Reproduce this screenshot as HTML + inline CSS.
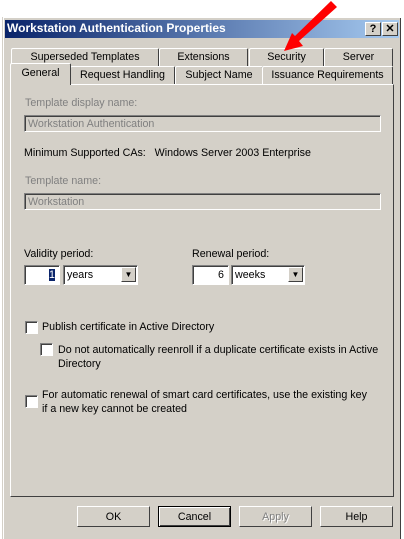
<!DOCTYPE html>
<html><head><style>
body{margin:0;width:404px;height:539px;background:#fff;position:relative;overflow:hidden;font-family:"Liberation Sans",Arial,sans-serif;font-size:10.7px;color:#000}
.a{position:absolute}
.win{left:2px;top:17px;width:398px;height:522px;background:#d4d0c8;border-left:1px solid #d4d0c8;box-shadow:inset 1px 1px 0 #fff,inset -1px 0 0 #404040}
.title{left:5px;top:20px;width:394px;height:18px;background:linear-gradient(90deg,#0a246a,#a6caf0)}
.tt{left:7px;top:21px;color:#fff;font-weight:bold;font-size:12px}
.tb{width:14px;height:12px;background:#d4d0c8;border:1px solid;border-color:#fff #404040 #404040 #fff;font-weight:bold;font-size:11px;text-align:center;line-height:12px}
.tab{height:17px;border:1px solid;border-color:#fff #404040 transparent #fff;border-bottom:none;text-align:center;line-height:17px;font-size:10.7px;border-radius:2px 2px 0 0}
.panel{left:10px;top:84px;width:382px;height:411px;border:1px solid;border-color:#fff #404040 #404040 #fff}
.gl{color:#808080}
.tx{height:17px;border:1px solid;border-color:#808080 #fff #fff #808080;box-shadow:inset 1px 1px 0 #404040;line-height:17px;padding-left:3px;box-sizing:border-box}
.w{background:#fff}
.cb{width:11px;height:11px;background:#fff;border:1px solid;border-color:#808080 #fff #fff #808080;box-shadow:inset 1px 1px 0 #404040}
.btn{top:506px;width:73px;height:21px;border:1px solid;border-color:#fff #404040 #404040 #fff;text-align:center;line-height:21px;font-size:10.7px;box-sizing:border-box}
.dd{width:15px;height:15px;background:#d4d0c8;border:1px solid;border-color:#fff #404040 #404040 #fff;box-sizing:border-box;top:1px;right:1px;position:absolute;font-size:8px;text-align:center;line-height:13px}
</style></head><body>
<div class="a win"></div>
<div class="a title"></div>
<div class="a tt">Workstation Authentication Properties</div>
<div class="a tb" style="left:365px;top:22px">?</div>
<div class="a tb" style="left:382px;top:22px">✕</div>

<div class="a tab" style="left:11px;top:48px;width:146px">Superseded Templates</div>
<div class="a tab" style="left:159px;top:48px;width:87px">Extensions</div>
<div class="a tab" style="left:249px;top:48px;width:73px">Security</div>
<div class="a tab" style="left:324px;top:48px;width:67px">Server</div>
<div class="a panel"></div>
<div class="a tab" style="left:10px;top:63px;width:59px;height:21px;line-height:19px;background:#d4d0c8;z-index:2">General</div>
<div class="a tab" style="left:70px;top:66px;width:103px;background:#d4d0c8">Request Handling</div>
<div class="a tab" style="left:175px;top:66px;width:86px;background:#d4d0c8">Subject Name</div>
<div class="a tab" style="left:262px;top:66px;width:129px;background:#d4d0c8">Issuance Requirements</div>

<div class="a gl" style="left:25px;top:97px">Template display name:</div>
<div class="a tx gl" style="left:24px;top:115px;width:357px">Workstation Authentication</div>
<div class="a" style="left:24px;top:147px">Minimum Supported CAs:&nbsp;&nbsp; Windows Server 2003 Enterprise</div>
<div class="a gl" style="left:25px;top:175px">Template name:</div>
<div class="a tx gl" style="left:24px;top:193px;width:357px">Workstation</div>

<div class="a" style="left:24px;top:248px">Validity period:</div>
<div class="a tx w" style="left:24px;top:265px;width:36px;height:20px;text-align:right;padding-right:4px;line-height:19px"><span style="background:#0a246a;color:#fff">1</span></div>
<div class="a tx w" style="left:63px;top:265px;width:75px;height:20px;line-height:19px">years<div class="dd">▼</div></div>
<div class="a" style="left:192px;top:248px">Renewal period:</div>
<div class="a tx w" style="left:192px;top:265px;width:37px;height:20px;text-align:right;padding-right:4px;line-height:19px">6</div>
<div class="a tx w" style="left:231px;top:265px;width:74px;height:20px;line-height:19px">weeks<div class="dd">▼</div></div>

<div class="a cb" style="left:25px;top:321px"></div>
<div class="a" style="left:42px;top:321px">Publish certificate in Active Directory</div>
<div class="a cb" style="left:40px;top:343px"></div>
<div class="a" style="left:58px;top:343px;line-height:14px;width:330px">Do not automatically reenroll if a duplicate certificate exists in Active Directory</div>
<div class="a cb" style="left:25px;top:395px"></div>
<div class="a" style="left:42px;top:388px;line-height:14px;width:340px">For automatic renewal of smart card certificates, use the existing key<br>if a new key cannot be created</div>

<div class="a btn" style="left:77px">OK</div>
<div class="a btn" style="left:158px;border:1px solid #000;box-shadow:inset 1px 1px 0 #fff,inset -1px -1px 0 #404040">Cancel</div>
<div class="a btn" style="left:239px;color:#808080;text-shadow:1px 1px 0 #fff">Apply</div>
<div class="a btn" style="left:320px">Help</div>

<svg class="a" style="left:0;top:0" width="404" height="60"><polygon points="331,1 337,7 299,41 303,46 284,51 292,33 295,36" fill="#f00"/></svg>
</body></html>
